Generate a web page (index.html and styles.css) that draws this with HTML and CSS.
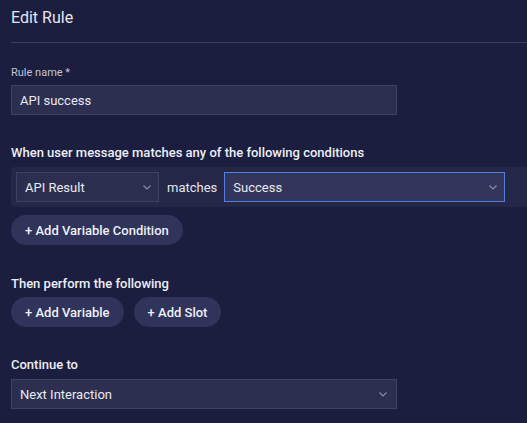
FILE: index.html
```html
<!DOCTYPE html>
<html>
<head>
<meta charset="utf-8">
<link rel="stylesheet" href="styles.css">
</head>
<body>
<div class="panel">
  <h1 class="title">Edit Rule</h1>
  <div class="divider"></div>

  <label class="field-label">Rule name *</label>
  <div class="input wide">API success</div>

  <div class="section-label first">When user message matches any of the following conditions</div>
  <div class="cond-row">
    <div class="select small">
      <span>API Result</span>
      <svg class="chev" width="8" height="5" viewBox="0 0 8 5"><path d="M0.5 0.5 L4 4 L7.5 0.5" fill="none" stroke="#8a8ca3" stroke-width="1.2"/></svg>
    </div>
    <span class="matches">matches</span>
    <div class="select big focused">
      <span>Success</span>
      <svg class="chev" width="8" height="5" viewBox="0 0 8 5"><path d="M0.5 0.5 L4 4 L7.5 0.5" fill="none" stroke="#8a8ca3" stroke-width="1.2"/></svg>
    </div>
  </div>
  <div class="btn-row cond-btn">
    <button class="pill">+ Add Variable Condition</button>
  </div>

  <div class="section-label then">Then perform the following</div>
  <div class="btn-row">
    <button class="pill">+ Add Variable</button>
    <button class="pill">+ Add Slot</button>
  </div>

  <div class="section-label cont">Continue to</div>
  <div class="select wide tall">
    <span>Next Interaction</span>
    <svg class="chev" width="8" height="5" viewBox="0 0 8 5"><path d="M0.5 0.5 L4 4 L7.5 0.5" fill="none" stroke="#8a8ca3" stroke-width="1.2"/></svg>
  </div>
</div>
</body>
</html>
```

FILE: styles.css
```css
html, body {
  margin: 0;
  padding: 0;
  background: #1b1e3f;
  height: 100%;
}
body {
  font-family: Roboto, "Noto Sans", Arial, sans-serif;
  color: #e6e7ef;
  overflow: hidden;
}
.panel {
  display: flex;
  flex-direction: column;
  align-items: flex-start;
  padding: 8px 0 0 11px;
}
.title {
  margin: 0;
  font-size: 16px;
  line-height: 20px;
  font-weight: 400;
  color: #e4e5ee;
}
.divider {
  align-self: stretch;
  height: 1px;
  background: #3a3d5e;
  margin-top: 14px;
}
.field-label {
  margin-top: 23px;
  font-size: 11px;
  line-height: 14px;
  color: #c2c4d3;
}
.input, .select {
  box-sizing: border-box;
  background: #2c2f50;
  border: 1px solid #3e4164;
  font-size: 13px;
  color: #e8e9f1;
  display: flex;
  align-items: center;
}
.input.wide {
  margin-top: 5px;
  width: 386px;
  height: 30px;
  padding-left: 8px;
}
.section-label {
  font-size: 13px;
  line-height: 16px;
  font-weight: 500;
  color: #eceef5;
}
.section-label.first { margin-top: 30px; }
.section-label.then { margin-top: 31px; }
.section-label.cont { margin-top: 30px; }
.cond-row {
  margin-top: 6px;
  align-self: stretch;
  display: flex;
  align-items: center;
  background: #242748;
  border-radius: 4px 0 0 4px;
  padding: 5px;
  height: 40px;
  box-sizing: border-box;
}
.select {
  height: 30px;
  padding: 0 7px 0 8px;
  justify-content: space-between;
}
.select.small {
  width: 143px;
  background: #2b2e4f;
}
.select.big {
  width: 281px;
  background: #33365a;
}
.select.focused {
  border-color: #4f7fe0;
}
.matches {
  font-size: 13px;
  color: #e4e5ee;
  margin: 0 7px 0 8px;
}
.select.wide {
  margin-top: 6px;
  width: 386px;
  height: 30px;
  padding-left: 8px;
  padding-right: 9px;
}
.btn-row {
  display: flex;
  gap: 10px;
  margin-top: 5px;
}
.btn-row.cond-btn { margin-top: 8px; }
.pill {
  font-family: inherit;
  font-size: 13px;
  font-weight: 500;
  color: #eef0f7;
  background: #30335a;
  border: none;
  border-radius: 15px;
  height: 30px;
  padding: 0 14px;
  cursor: pointer;
}
.chev { flex: none; }
```
